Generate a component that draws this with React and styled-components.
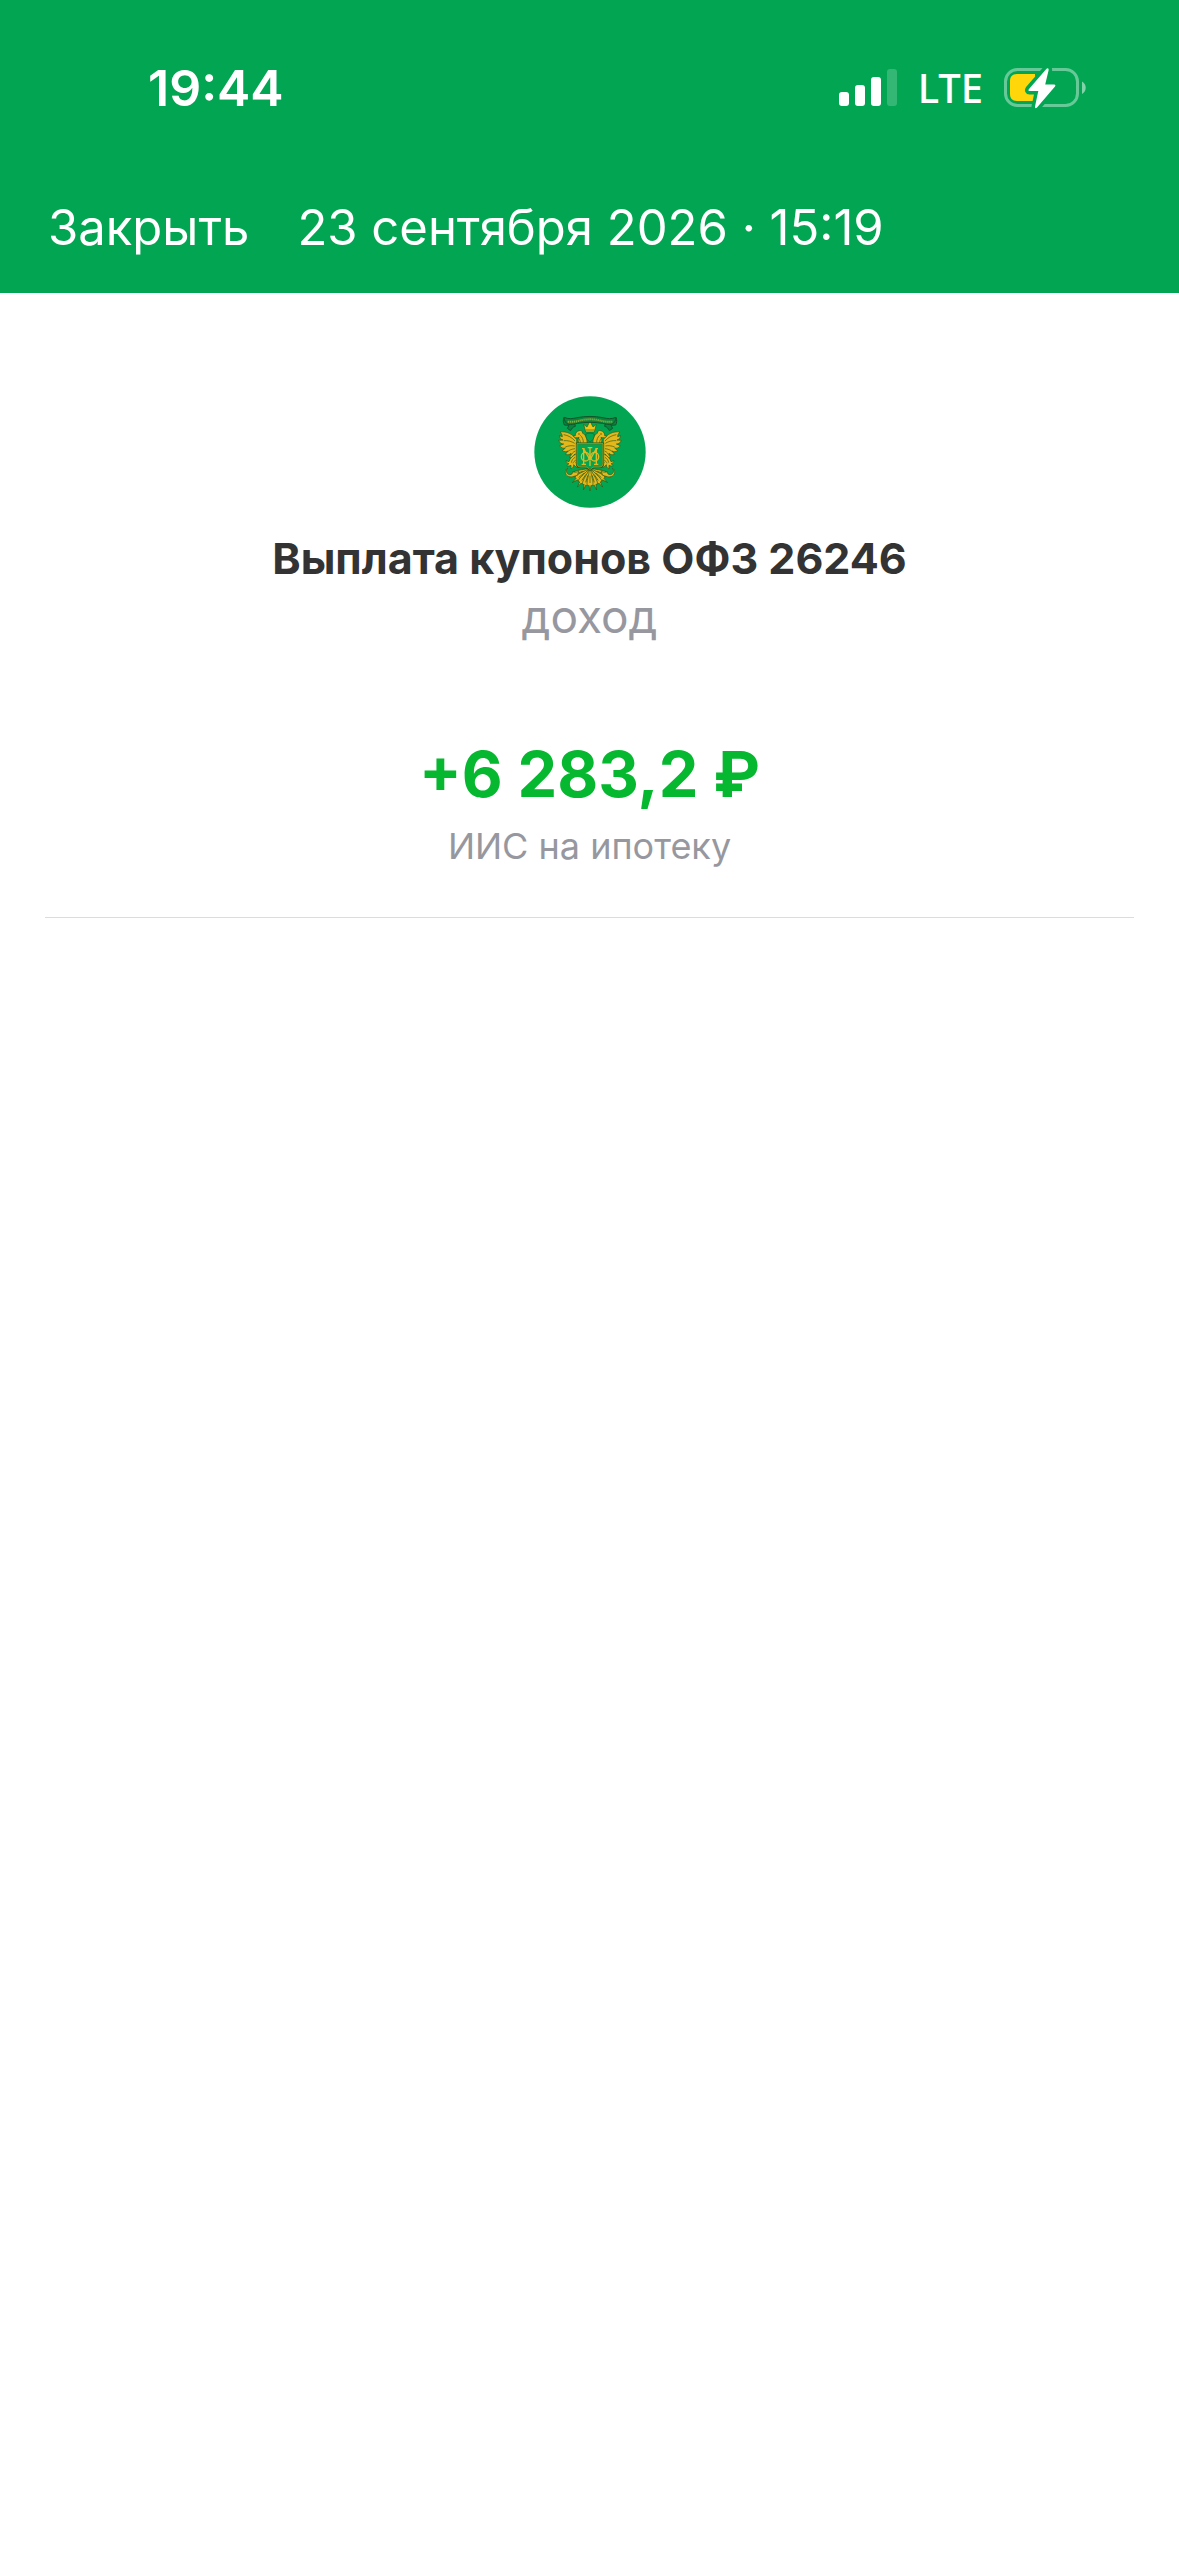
import React from 'react';
import styled, { createGlobalStyle } from 'styled-components';

const GlobalStyle = createGlobalStyle`
  * {
    box-sizing: border-box;
  }

  body {
    margin: 0;
    background-color: #ffffff;
    font-family: Inter, 'Liberation Sans', sans-serif;
  }
`;

const Header = styled.header`
  background-color: #02a652;
  color: white;
`;

const StatusBar = styled.div`
  display: flex;
  justify-content: space-between;
  align-items: center;
  height: 176px;
  padding: 0 91px 0 148px;
`;

const Time = styled.div`
  font-size: 50px;
  font-weight: 600;
  line-height: 60px;
`;

const Indicators = styled.div`
  display: flex;
  align-items: center;
  gap: 21px;
`;

const Network = styled.div`
  font-family: 'Noto Sans', 'Open Sans', sans-serif;
  font-size: 40px;
  font-weight: 500;
  line-height: 60px;
`;

const NavBar = styled.nav`
  display: flex;
  align-items: center;
  gap: 48px;
  padding: 22px 48px 35px;
`;

const CloseButton = styled.button`
  padding: 0;
  border: none;
  background: none;
  color: inherit;
  font-family: inherit;
  font-size: 49px;
  font-weight: 400;
  line-height: 60px;
  cursor: pointer;
`;

const NavTitle = styled.div`
  font-size: 49px;
  font-weight: 400;
  line-height: 60px;
`;

const Details = styled.main`
  display: flex;
  flex-direction: column;
  align-items: center;
  margin: 0 45px;
  padding: 103px 0 47px;
  border-bottom: 1px solid #dcdcdc;
  text-align: center;
`;

const EmblemIcon = styled.svg`
  width: 112px;
  height: 112px;
  margin-bottom: 19px;
`;

const Title = styled.h1`
  margin: 0;
  color: #333333;
  font-size: 43px;
  font-weight: 700;
  line-height: 62px;
`;

const Category = styled.div`
  color: #97989f;
  font-size: 46px;
  font-weight: 400;
  line-height: 54px;
`;

const Amount = styled.div`
  margin-top: 91px;
  color: #06b82f;
  font-size: 63px;
  font-weight: 700;
  line-height: 80px;
`;

const Account = styled.div`
  margin-top: 8px;
  color: #97989f;
  font-size: 36px;
  font-weight: 400;
  line-height: 48px;
`;

const SignalIcon = () => (
  <svg width="58" height="38" viewBox="0 0 58 38" fill="white" aria-hidden="true">
    <rect x="0" y="23" width="10" height="14" rx="3" />
    <rect x="16" y="16" width="10" height="21" rx="3" />
    <rect x="32" y="8" width="10" height="29" rx="3" />
    <rect x="48" y="0" width="10" height="37" rx="3" opacity="0.2" />
  </svg>
);

const BatteryIcon = () => (
  <svg width="84" height="44" viewBox="0 0 84 44" aria-hidden="true">
    <rect x="1.5" y="3.5" width="72" height="36" rx="12" fill="none" stroke="white" strokeOpacity="0.4" strokeWidth="3" />
    <path d="M78 15.500c5 2.500 5 10 0 12.500z" fill="white" fillOpacity="0.5" />
    <path d="M13 8h18v27H13c-5 0-7-3-7-7V15c0-4 2-7 7-7z" fill="#ffd60a" />
    <path
      d="M42.500 2.800 24.800 23.200c-.7 1-.3 1.800.8 1.800h8.700L31 40.500c-.3 1.700.8 2.200 2 1L51 20.500c.8-1 .3-1.900-.8-1.900h-9l3.400-14.400c.3-1.900-1-2.500-2.100-1.400z"
      fill="white"
      stroke="#02a652"
      strokeWidth="7"
      paintOrder="stroke"
    />
  </svg>
);

const tailFeathers = [-68, 68, -51, 51, -34, 34, -17, 17, 0];

const EagleHalf = () => (
  <g>
    <g fill="#e4b81b" stroke="#2a5a1c" strokeWidth="2" strokeLinejoin="round">
      {/* wing */}
      <path d="M157 160c-12-17-30-26-50-23 5 5 7 9 7 14l-9-3c1 7 5 11 11 13l-13 1c3 8 8 11 15 11l-12 5c4 7 11 9 17 7l-9 8c6 4 12 4 17 1l-8 10c7 3 13 1 17-3l-4 14c8-1 13-6 15-12l1 14c5-3 6-9 6-17z" />
      <path d="M152 164c-9-10-20-17-34-19M151 171c-10-6-20-9-33-8M151 179c-9-2-18-1-28 3M152 187c-9 1-17 4-22 9M153 194c-7 3-11 8-13 14" fill="none" />
      {/* head and neck */}
      <path d="M188 171c1-15-4-26-13-30 0-7-5-10-11-8-7 2-12 8-11 15l-6 1c2 4 5 6 9 5 3 1 6 0 8-1-4 6-3 12 0 18z" />
      <path d="M168 147c6 5 9 13 9 21M162 155c4 4 6 9 6 15" fill="none" />
      {/* leg and claw */}
      <path d="M156 202c-10 6-20 14-22 24l-9-3c1 6 4 8 9 9l-7 6c5 2 9 1 13-1l0 11c6-3 8-7 8-13l9 9c3-6 2-11-2-15 4-5 5-12 4-20z" />
      <path d="M152 213c-6 4-10 9-11 16M154 222c-4 2-7 5-8 9" fill="none" />
      {/* side scroll */}
      <path d="M130 245c-7 8-3 19 6 20 6 0 10-4 9-9 7 3 14 2 19-3l-5 14-14 4c-13 3-23-5-22-15 1-5 3-9 7-11z" />
    </g>
    <circle cx="164" cy="143" r="2" fill="#2a5a1c" />
  </g>
);

const Emblem = () => (
  <EmblemIcon viewBox="29 29 336 336" role="img" aria-label="ОФЗ">
    <circle cx="197" cy="197" r="167" fill="#02a652" />
    {/* tail */}
    <g fill="#e4b81b" stroke="#2a5a1c" strokeWidth="2" strokeLinejoin="round">
      {tailFeathers.map((angle) => (
        <g key={angle} transform={`rotate(${angle} 197 246)`}>
          <path d="M195 248c-1 20-7 30-7 43 0 6 3 9 6 6l3 17 3-17c3 3 6 0 6-6 0-13-6-23-7-43z" />
          <path d="M197 268v22" fill="none" />
        </g>
      ))}
    </g>
    <EagleHalf />
    <g transform="matrix(-1 0 0 1 394 0)">
      <EagleHalf />
    </g>
    {/* crown */}
    <g fill="#f2c514" stroke="#2a5a1c" strokeWidth="2" strokeLinejoin="round">
      <path d="m184 137-6-23 10 8 9-18 9 18 10-8-6 23z" />
      <path d="M184 131h26" fill="none" />
    </g>
    <path d="M184 144c8-5 18-5 26 0 0 10-4 18-13 23-9-5-13-13-13-23z" fill="#02a652" stroke="#2a5a1c" strokeWidth="2" />
    {/* ribbon */}
    <g fill="#06853f" stroke="#12552b" strokeWidth="3" strokeLinejoin="round">
      <path d="M119 93c-3 8-3 16 1 23l14 1-5 9 10 7c3-6 6-11 14-13l-3-13z" />
      <path d="M275 93c3 8 3 16-1 23l-14 1 5 9-10 7c-3-6-6-11-14-13l3-13z" />
      <path d="M119 93c14 6 26 4 39 1 26-5 52-5 78 0 13 3 25 5 39-1-1 10-5 18-13 21-8 2-18-1-28-3-25-4-49-4-74 0-10 2-20 5-28 3-8-3-12-11-13-21z" />
    </g>
    <path d="M130 106c34 2 34-7 67-7s33 9 67 7" fill="none" stroke="#8fa83a" strokeWidth="6" strokeDasharray="4 2" />
    {/* shield with monogram */}
    <path d="M157 171h80v61c0 8-5 11-13 11h-12c-7 0-11 3-15 8-4-5-8-8-15-8h-12c-8 0-13-3-13-11z" fill="#02a652" stroke="#2a5a1c" strokeWidth="5" />
    <path d="M158 172h78v60c0 7-5 10-12 10h-12c-7 0-11 3-15 8-4-5-8-8-15-8h-12c-7 0-12-3-12-10z" fill="none" stroke="#dcb41b" strokeWidth="2" />
    <g fill="none" stroke="#dcbb24" strokeWidth="4">
      <path d="M197 182v57M190 184h14M178 187l19 34 19-34M178 187v47M216 187v47M172 234h13M209 234h13M173 187h8M213 187h8" />
      <ellipse cx="183" cy="211" rx="12" ry="13" />
      <ellipse cx="211" cy="211" rx="12" ry="13" />
    </g>
  </EmblemIcon>
);

const App = () => {
  return (
    <>
      <GlobalStyle />
      <Header>
        <StatusBar>
          <Time>19:44</Time>
          <Indicators>
            <SignalIcon />
            <Network>LTE</Network>
            <BatteryIcon />
          </Indicators>
        </StatusBar>
        <NavBar>
          <CloseButton type="button">Закрыть</CloseButton>
          <NavTitle>23 сентября 2026 · 15:19</NavTitle>
        </NavBar>
      </Header>
      <Details>
        <Emblem />
        <Title>Выплата купонов ОФЗ 26246</Title>
        <Category>доход</Category>
        <Amount>+6 283,2 ₽</Amount>
        <Account>ИИС на ипотеку</Account>
      </Details>
    </>
  );
};

export default App;
